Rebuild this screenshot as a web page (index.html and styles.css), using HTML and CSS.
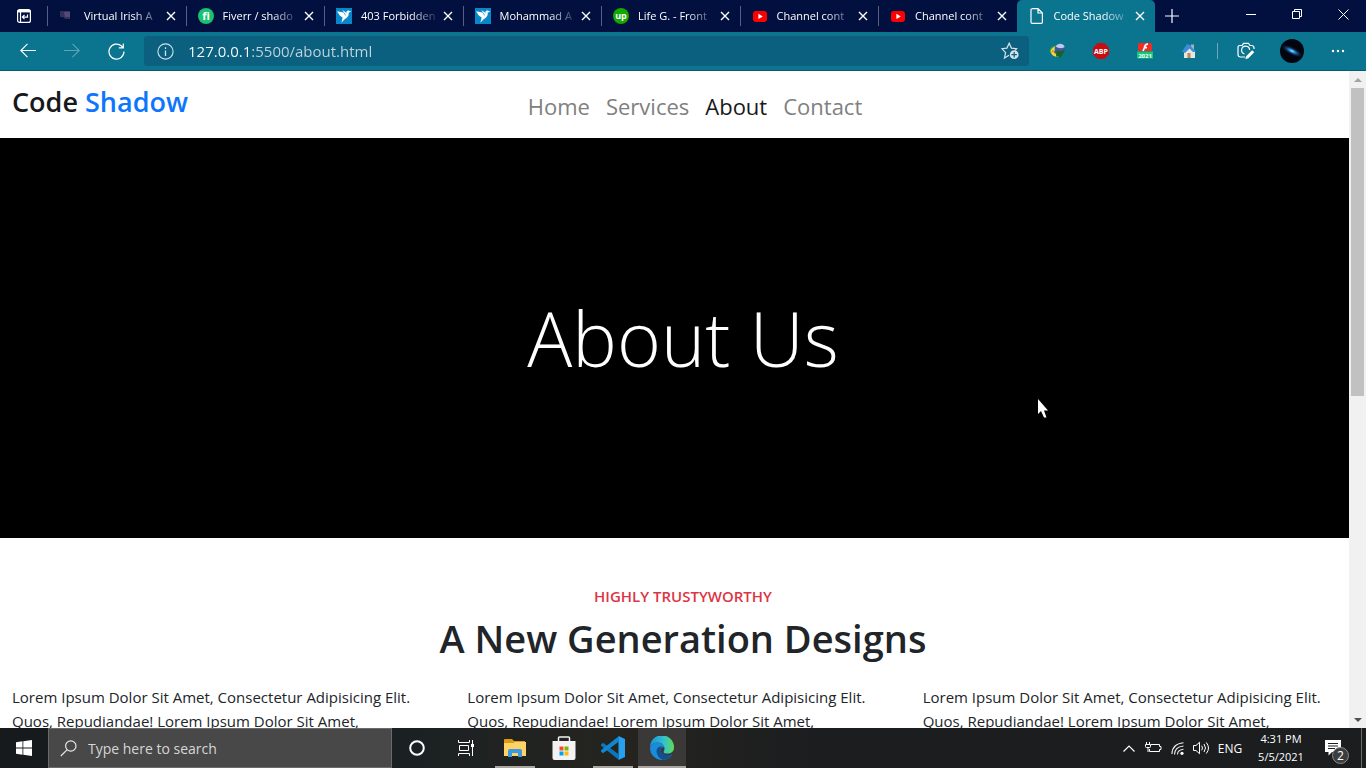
FILE: index.html
```html
<!DOCTYPE html>
<html lang="en">
<head>
<meta charset="utf-8">
<meta name="viewport" content="width=device-width, initial-scale=1">
<title>Code Shadow</title>
<link rel="stylesheet" href="styles.css">
</head>
<body>
<svg class="defs" aria-hidden="true">
  <symbol id="close" viewBox="0 0 10 10"><path d="M1 1l8 8M9 1l-8 8" fill="none" stroke="currentColor" stroke-width="1.4"/></symbol>
  <symbol id="youtube" viewBox="0 0 16 16"><rect x="1" y="3" width="14" height="11" rx="3" fill="#f00"/><path d="M6.4 5.8v5.2l4.4-2.6z" fill="#fff"/></symbol>
  <symbol id="bird" viewBox="0 0 16 16"><rect width="16" height="16" fill="#0787c9"/><path d="M1 3.200L7.600 4.600 9.600 8l-1.800 2.600-4-3.200z" fill="#fff"/><path d="M6.200 2L9.800 4.200 10.200 7.500 8.400 5z" fill="#fff"/><path d="M9.600 7.500L10.400 4q.6-1.600 2.200-1.400L15.400 3.800 12.800 4.600Q13 9.500 8.600 11.200L5.400 14.800 6.600 9.800z" fill="#fff"/></symbol>
</svg>

<header class="browser">
  <div class="tabstrip">
    <button class="tab-actions" aria-label="Tab actions menu"><svg width="16" height="16" viewBox="0 0 16 16" fill="none" stroke="#fff" stroke-width="1.2"><rect x="1.600" y="1.600" width="12.800" height="12.800" rx="2"/><path d="M1.600 3.200h12.800" stroke-width="2.400"/><path d="M4.500 3v11.500M11.500 6.500v2.600H6.500M8.500 7L6.400 9.100l2.100 2.100"/></svg></button>
    <div class="tabs">
      <div class="tab"><button class="tab-title"><svg class="favicon" viewBox="0 0 16 16"><path d="M1 3h10v8H6L4 9H1z" fill="#34305c"/><path d="M5 4h6v5H6z" fill="#544a78"/></svg><span>Virtual Irish A</span></button><button class="tab-close" aria-label="Close tab"><svg><use href="#close"/></svg></button></div>
      <div class="tab"><button class="tab-title"><svg class="favicon" viewBox="0 0 16 16"><circle cx="8" cy="8" r="8" fill="#1dbf73"/><text x="8" y="12" text-anchor="middle" class="glyph-fi">fi</text></svg><span>Fiverr / shado</span></button><button class="tab-close" aria-label="Close tab"><svg><use href="#close"/></svg></button></div>
      <div class="tab"><button class="tab-title"><svg class="favicon"><use href="#bird"/></svg><span>403 Forbidden</span></button><button class="tab-close" aria-label="Close tab"><svg><use href="#close"/></svg></button></div>
      <div class="tab"><button class="tab-title"><svg class="favicon"><use href="#bird"/></svg><span>Mohammad A</span></button><button class="tab-close" aria-label="Close tab"><svg><use href="#close"/></svg></button></div>
      <div class="tab"><button class="tab-title"><svg class="favicon" viewBox="0 0 16 16"><circle cx="8" cy="8" r="8" fill="#14a800"/><text x="8" y="11" text-anchor="middle" class="glyph-up">up</text></svg><span>Life G. - Front</span></button><button class="tab-close" aria-label="Close tab"><svg><use href="#close"/></svg></button></div>
      <div class="tab"><button class="tab-title"><svg class="favicon"><use href="#youtube"/></svg><span>Channel cont</span></button><button class="tab-close" aria-label="Close tab"><svg><use href="#close"/></svg></button></div>
      <div class="tab"><button class="tab-title"><svg class="favicon"><use href="#youtube"/></svg><span>Channel cont</span></button><button class="tab-close" aria-label="Close tab"><svg><use href="#close"/></svg></button></div>
      <div class="tab active"><button class="tab-title"><svg class="favicon" viewBox="0 0 16 16" fill="none" stroke="#fff" stroke-width="1.200"><path d="M3 .6h6l4.400 4.400v9.200q0 1.200-1.200 1.200H3.200Q2 15.400 2 14.200V1.800Q2 .6 3.200.6zM9 .8V5h4.200"/></svg><span>Code Shadow</span></button><button class="tab-close" aria-label="Close tab"><svg><use href="#close"/></svg></button></div>
    </div>
    <button class="new-tab" aria-label="New tab"><svg width="14" height="14" viewBox="0 0 14 14" stroke="#fff" stroke-width="1.200"><path d="M7 0v14M0 7h14"/></svg></button>
    <div class="window-controls">
      <button aria-label="Minimize"><svg width="10" height="10" viewBox="0 0 10 10" stroke="#fff"><path d="M0 5.500h10"/></svg></button>
      <button aria-label="Restore"><svg width="10" height="10" viewBox="0 0 10 10" fill="none" stroke="#fff"><path d="M.5 2.500h7v7h-7zM2.500 2V.5h7v7H8"/></svg></button>
      <button aria-label="Close window"><svg width="11" height="11" viewBox="0 0 11 11" stroke="#fff"><path d="M.5.5l10 10M10.500.5l-10 10"/></svg></button>
    </div>
  </div>
  <div class="toolbar">
    <button aria-label="Back"><svg width="16" height="16" viewBox="0 0 16 16" fill="none" stroke="#fff" stroke-width="1.100"><path d="M16 7.500H.8M7.500.800L.8 7.500l6.700 6.700"/></svg></button>
    <button aria-label="Forward" disabled><svg width="16" height="16" viewBox="0 0 16 16" fill="none" stroke="#5fa3b4" stroke-width="1.100"><path d="M0 7.500h15.200M8.500.800l6.700 6.700-6.700 6.700"/></svg></button>
    <button aria-label="Refresh"><svg width="17" height="17" viewBox="0 0 17 17" fill="none" stroke="#fff" stroke-width="1.200"><path d="M16 8.500A7.500 7.500 0 1 1 13.500 3L15 4.600M15.300.5v4.300h-4.500"/></svg></button>
    <form class="address">
      <svg width="17" height="17" viewBox="0 0 17 17" fill="none" stroke="#cfe3ea" stroke-width="1.100"><circle cx="8.500" cy="8.500" r="7.600"/><path d="M8.500 7.500V13M8.500 4.300v1.600" stroke-width="1.300"/></svg>
      <input type="text" aria-label="Address" value="127.0.0.1:5500/about.html">
      <button type="button" aria-label="Add this page to favorites"><svg width="19" height="18" viewBox="0 0 19 18" fill="none" stroke="#d5e2e7" stroke-width="1.200"><path d="M8 13.200L3.500 16l1.100-5.300L.9 6.700l5-.6L8.200 1.200l2.200 4.900 5.200.6-1.500 1.600"/><circle cx="13.200" cy="12.700" r="4.400" fill="#d5e2e7" stroke="none"/><path d="M13.200 10v5.400M10.500 12.700h5.400" stroke="#0c607f"/></svg></button>
    </form>
    <div class="extensions">
      <button aria-label="Download manager"><svg width="17" height="16" viewBox="0 0 17 16"><path d="M9 2.500C4 2 .5 5 .7 9l3 1.500Q4 6.500 9 5z" fill="#4fa83a"/><path d="M8.500 3.500C4.500 3.500 1.500 6 1.700 9.500l3 1Q4.500 7 9 5.500z" fill="#efe03c"/><path d="M3 7.500q-1.500 3 1 5l5 1-1-3q-3 0-3-3z" fill="#e2702a"/><path d="M4.500 8q0 3 4 3.500v2.500q-5-.5-6.500-4z" fill="#f0d93a"/><circle cx="10.800" cy="6" r="5.200" fill="#3f55a0"/><path d="M6.500 3.500Q8 .8 11 .8q3.500 0 4.700 3.200Q11 6.800 6.500 3.500z" fill="#bccbea"/><path d="M7.500 7.500l2.800.8 5.700-1L11.500 15 9.500 12.500 7 14z" fill="#17641d"/></svg></button>
      <button aria-label="Adblock Plus"><svg width="16" height="16" viewBox="0 0 16 16"><path d="M4.700 0h6.600L16 4.700v6.600L11.300 16H4.700L0 11.300V4.700z" fill="#c70d12"/><text x="8" y="11" text-anchor="middle" class="glyph-abp">ABP</text></svg></button>
      <button aria-label="Flash player"><svg width="16" height="16" viewBox="0 0 16 16"><path d="M1 1.500Q1 0 2.500 0h11Q15 0 15 1.500V8H1z" fill="#f02c25"/><path d="M11 1.200Q8 1 7.300 5L6 8M7 4.700h3" stroke="#fff" stroke-width="1.700" fill="none"/><path d="M0 8.500h16v7H0z" fill="#12c979"/><text x="8" y="14.500" text-anchor="middle" class="glyph-year">2021</text></svg></button>
      <button aria-label="Home extension"><svg width="16" height="16" viewBox="0 0 16 16"><path d="M3 8l6-5 5 5v7H3z" fill="#e7e7e2"/><path d="M10 1.500h3V7h-3z" fill="#a8b1b8"/><path d="M1 8.500L6 1l3 1 6 7H12L8.500 5.500 4 10z" fill="#3d8cda"/><path d="M6.500 10h3v5h-3z" fill="#b8894f"/></svg></button>
      <span class="separator"></span>
      <button aria-label="Web capture"><svg width="18" height="18" viewBox="0 0 18 18" fill="none" stroke="#fff" stroke-width="1.200"><path d="M8 15H3.500Q1 15 1 12.500v-7Q1 3.500 3 3.500h2L6.500 1.300h5L13 3.500h1.500Q17 3.500 17 6v1"/><path d="M7.500 12A4 4 0 1 1 12.600 8"/><path d="M16.200 9.200l-6.200 6.300" stroke-width="3"/><path d="M8.300 17.200l.8-3 2.100 2.100z" fill="#fff" stroke="none"/></svg></button>
      <button class="profile" aria-label="Profile"><svg width="24" height="24" viewBox="0 0 24 24"><defs><radialGradient id="galaxy"><stop offset="0" stop-color="#c8ecff"/><stop offset=".25" stop-color="#2b93e6"/><stop offset="1" stop-color="#031638" stop-opacity="0"/></radialGradient></defs><circle cx="12" cy="12" r="12" fill="#02050f"/><ellipse cx="12" cy="12" rx="12" ry="4" fill="url(#galaxy)" transform="rotate(27 12 12)"/></svg></button>
      <button aria-label="Settings and more"><svg width="14" height="4" viewBox="0 0 14 4" fill="#fff"><circle cx="2" cy="2" r="1.200"/><circle cx="7" cy="2" r="1.200"/><circle cx="12" cy="2" r="1.200"/></svg></button>
    </div>
  </div>
</header>

<div class="viewport">
  <div class="page">
    <div class="site-header">
      <a class="brand" href="#">Code <span>Shadow</span></a>
      <nav class="site-nav" aria-label="Main">
        <a href="#">Home</a><a href="#">Services</a><a class="current" href="#">About</a><a href="#">Contact</a>
      </nav>
    </div>
    <section class="hero"><h1>About Us</h1></section>
    <section class="intro">
      <p class="eyebrow">HIGHLY TRUSTYWORTHY</p>
      <h2>A New Generation Designs</h2>
      <div class="columns">
        <p>Lorem Ipsum Dolor Sit Amet, Consectetur Adipisicing Elit. Quos, Repudiandae! Lorem Ipsum Dolor Sit Amet,</p>
        <p>Lorem Ipsum Dolor Sit Amet, Consectetur Adipisicing Elit. Quos, Repudiandae! Lorem Ipsum Dolor Sit Amet,</p>
        <p>Lorem Ipsum Dolor Sit Amet, Consectetur Adipisicing Elit. Quos, Repudiandae! Lorem Ipsum Dolor Sit Amet,</p>
      </div>
    </section>
  </div>
  <div class="scrollbar">
    <button aria-label="Scroll up"><svg width="8" height="4" viewBox="0 0 8 4"><path d="M0 4l4-4 4 4z" fill="#a3a3a3"/></svg></button>
    <div class="track"><div class="thumb"></div></div>
    <button aria-label="Scroll down"><svg width="8" height="4" viewBox="0 0 8 4"><path d="M0 0l4 4 4-4z" fill="#505050"/></svg></button>
  </div>
  <svg class="cursor" width="12" height="19" viewBox="0 0 12 19" aria-hidden="true"><path d="M0 0v15l3-3 3 6.500h2.500L6 11.500h4z" fill="#fff"/></svg>
</div>

<footer class="taskbar">
  <button class="start" aria-label="Start"><svg width="16" height="16" viewBox="0 0 16 16" fill="#fff"><path d="M0 2.200L6.500 1.300v6.300H0zM7.300 1.200L16 0v7.600H7.300zM0 8.400h6.500v6.300L0 13.800zM7.300 8.400H16V16l-8.700-1.200z"/></svg></button>
  <label class="search"><svg width="17" height="17" viewBox="0 0 17 17" fill="none" stroke="#e8e8e8" stroke-width="1.200"><circle cx="10.800" cy="6" r="5.200"/><path d="M7 9.800L.8 16"/></svg><input type="text" aria-label="Search" placeholder="Type here to search"></label>
  <div class="apps">
    <button aria-label="Cortana"><svg width="16" height="16" viewBox="0 0 16 16"><circle cx="8" cy="8" r="6.800" fill="none" stroke="#fff" stroke-width="2"/></svg></button>
    <button aria-label="Task view"><svg width="17" height="16" viewBox="0 0 17 16" fill="none" stroke="#fff"><path d="M.5 0v2.500h11V0M1.500 5.500h9v5h-9zM.5 16v-2.500h11V16M14.500 0v16"/><path d="M13 4h3v3h-3z" fill="#fff" stroke="none"/></svg></button>
    <button class="open" aria-label="File Explorer"><svg width="22" height="18" viewBox="0 0 22 18"><path d="M0 1Q0 0 1 0h7l2 2h11v5H0z" fill="#dd9b0f"/><path d="M0 4h9l2-1h11v14H0z" fill="#fdd267"/><path d="M4 18v-6q0-2 2-2h10q2 0 2 2v6h-4v-4H8v4z" fill="#3b98e2"/></svg></button>
    <button aria-label="Microsoft Store"><svg width="24" height="24" viewBox="0 0 24 24"><path d="M6.500 6V2q0-1 1-1h9q1 0 1 1v4" fill="none" stroke="#f3f3f3" stroke-width="1.500"/><path d="M.5 5h23v17q0 2-2 2h-19q-2 0-2-2z" fill="#f3f3f3"/><path d="M7.500 10.500h4v4h-4z" fill="#f04e23"/><path d="M12.500 10.500h4v4h-4z" fill="#7eb900"/><path d="M7.500 15.500h4v4h-4z" fill="#00a3ee"/><path d="M12.500 15.500h4v4h-4z" fill="#fdb813"/></svg></button>
    <button class="open" aria-label="Visual Studio Code"><svg width="24" height="24" viewBox="0 0 24 24"><path d="M17.500 0L24 3v18l-6.500 3z" fill="#27a0ee"/><path d="M0 8.500L2 6.800 18 18.500V24L0 9.800z" fill="#0877c0"/><path d="M0 15.500l2 1.700L18 5.500V0L0 14.200z" fill="#1187d1"/></svg></button>
    <button class="open current" aria-label="Microsoft Edge"><svg width="24" height="24" viewBox="0 0 24 24"><defs><linearGradient id="edgeTop"><stop offset="0" stop-color="#1793d8"/><stop offset=".6" stop-color="#35c2cb"/><stop offset="1" stop-color="#60dd4c"/></linearGradient></defs><path d="M0 11.500C1 8.500 4 6.500 7.500 6.500q5 0 7 4.500-4 0-4 3.500 1 5 7 5 3 0 5-1.500Q19 24 12 24A12 12 0 0 1 0 11.500z" fill="#1b8bdc"/><path d="M12.500 10.500q-6-.5-6 5 .5 6 6.500 8.500 6-.5 9.500-6-2 1-5 1-6 0-7-5 0-2.500 2-3.500z" fill="#10508f"/><path d="M0 11A12 12 0 0 1 24 11.500c0 4-3 6-6.500 6-3 0-4.500-1-3.700-2.200C16 11.500 13 6.500 8 6.500 4.500 6.500 1 8.500 0 11z" fill="url(#edgeTop)"/></svg></button>
  </div>
  <div class="tray">
    <button aria-label="Show hidden icons"><svg width="12" height="7" viewBox="0 0 12 7" fill="none" stroke="#fff" stroke-width="1.200"><path d="M.5 6.500L6 1l5.500 5.500"/></svg></button>
    <button aria-label="Battery"><svg width="17" height="12" viewBox="0 0 17 12" fill="none" stroke="#fff"><path d="M6 2.500h8.500v2H16v3h-1.500v2h-10V7M1.500 0v2.500M4.500 0v2.500M.5 2.500h5v2q0 1-1 1h-3q-1 0-1-1zM3 5.500V10"/></svg></button>
    <button aria-label="Network"><svg width="13" height="13" viewBox="0 0 13 13" fill="none" stroke="#eee" stroke-width="1.100"><path d="M1 12Q1 2 12.500.8M3.500 12.500q0-7.500 9-8.500M6.500 12.500q0-4.500 6-5.200"/><circle cx="11" cy="11.300" r="1.600" fill="#fff" stroke="none"/></svg></button>
    <button aria-label="Volume"><svg width="17" height="14" viewBox="0 0 17 14" fill="none" stroke="#fff"><path d="M.5 4.500H3L6.500 1.300v11.400L3 9.500H.5zM8.700 4.700q1.600 2.300 0 4.600M11 3q3 4 0 8M13.300 1.500q4.400 5.500 0 11"/></svg></button>
    <button class="language" aria-label="Language">ENG</button>
    <button class="clock"><span>4:31 PM</span><span>5/5/2021</span></button>
    <button class="notifications" aria-label="Notifications"><svg width="16" height="16" viewBox="0 0 16 16"><path d="M0 0h16v12H7l-3.500 3.500V12H0z" fill="#fff"/><path d="M3 3.500h10M3 6h10M3 8.500h7" stroke="#1d2023"/></svg><span class="badge">2</span></button>
    <button class="show-desktop" aria-label="Show desktop"></button>
  </div>
</footer>
</body>
</html>
```

FILE: styles.css
```css
* { box-sizing: border-box; }
body {
  margin: 0;
  height: 100vh;
  display: flex;
  flex-direction: column;
  overflow: hidden;
  font-family: "Open Sans", "Noto Sans", sans-serif;
  font-size: 15px;
  color: #212529;
  background: #fff;
}
button {
  display: flex;
  align-items: center;
  justify-content: center;
  flex: none;
  padding: 0;
  border: 0;
  background: none;
  color: #fff;
  font: inherit;
}
input { border: 0; padding: 0; background: none; font: inherit; outline: 0; min-width: 0; }
a { text-decoration: none; }
svg { flex: none; display: block; }
.defs { position: absolute; width: 0; height: 0; }

/* Tab strip */
.tabstrip { display: flex; height: 32px; background: #01103f; }
.tab-actions { width: 47px; }
.tabs { display: flex; flex: 0 1 1108px; min-width: 0; }
.tab {
  display: flex;
  align-items: center;
  flex: 1;
  min-width: 0;
  padding: 0 4px 0 12px;
  background: linear-gradient(#59607f, #59607f) left center / 1px 20px no-repeat;
}
.tab.active { background: #0b748e; border-radius: 5px 5px 0 0; }
.tab-title { flex: 1; min-width: 0; justify-content: flex-start; gap: 9px; font-size: 11px; line-height: 20px; }
.tab-title span {
  flex: 1;
  min-width: 0;
  overflow: hidden;
  white-space: nowrap;
  text-align: left;
  mask-image: linear-gradient(90deg, #000 65%, rgba(0, 0, 0, 0.1));
}
.favicon { width: 16px; height: 16px; }
.tab-close { width: 22px; height: 24px; }
.tab-close svg { width: 10px; height: 10px; }
.new-tab { width: 34px; }
.window-controls { display: flex; margin-left: auto; }
.window-controls button { width: 46px; padding-bottom: 4px; }
.glyph-fi { font: bold 11px "Open Sans", sans-serif; fill: #fff; }
.glyph-up { font: bold 9px "Open Sans", sans-serif; fill: #fff; }
.glyph-abp { font: bold 7px "Open Sans", sans-serif; fill: #fff; }
.glyph-year { font: bold 6px "Open Sans", sans-serif; fill: #fff; }

/* Toolbar */
.toolbar {
  display: flex;
  align-items: center;
  height: 39px;
  padding: 0 6px;
  background: #0b748e;
  border-bottom: 1px solid #0b5a72;
}
.toolbar button { width: 44px; height: 30px; }
.address {
  display: flex;
  align-items: center;
  flex: 1;
  height: 30px;
  margin: 0 6px;
  padding-left: 13px;
  gap: 14px;
  border-radius: 3px;
  background: #0c607f;
}
.address input {
  flex: 1;
  height: 30px;
  color: transparent;
  background: linear-gradient(90deg, #fff 63px, #c2d5dd 63px);
  background-clip: text;
}
.toolbar .address button { width: 38px; }
.extensions { display: flex; align-items: center; }
.separator { width: 1px; height: 16px; margin: 0 6px; background: #6da9b9; }
.toolbar .profile { width: 48px; }

/* Web page */
.viewport { position: relative; flex: 1; min-height: 0; overflow: hidden; }
.site-header {
  display: grid;
  grid-template-columns: 1fr auto 1fr;
  align-items: start;
  height: 67px;
  padding: 8px 12px;
}
.brand { color: #16181b; font-size: 27px; font-weight: 600; line-height: 46px; }
.brand span { color: #0d76fd; }
.site-nav { display: flex; padding-left: 24px; }
.site-nav a { padding: 8px; color: #808080; font-size: 22px; line-height: 38px; }
.site-nav .current { color: #191919; }
.hero { display: grid; place-items: center; height: 400px; background: #000; color: #fff; }
.hero h1 { margin: 0; font-size: 75px; font-weight: 300; line-height: 96px; }
.intro { padding-top: 48px; text-align: center; }
.eyebrow { margin: 0; color: #dc3545; font-size: 15px; font-weight: 600; line-height: 20px; }
.intro h2 { margin: 8px 0 23px; font-size: 38px; font-weight: 600; line-height: 48px; }
.columns { display: grid; grid-template-columns: repeat(3, 1fr); text-align: left; }
.columns p { margin: 0; padding: 0 12px; line-height: 24px; }

.scrollbar {
  position: absolute;
  inset: 0 0 0 auto;
  width: 17px;
  display: flex;
  flex-direction: column;
  background: #f1f1f1;
}
.scrollbar button { height: 17px; }
.track { flex: 1; padding: 0 2px; }
.thumb { height: 49.5%; background: #c1c1c1; }
.cursor { position: absolute; left: 1038px; top: 328px; }

/* Taskbar */
.taskbar { display: flex; flex: none; height: 40px; background: linear-gradient(90deg, #171a1d, #1b2123 30%, #25241f 45%, #1b1d1f 60%); }
.start { width: 48px; }
.search {
  display: flex;
  align-items: center;
  gap: 11px;
  flex: 0 1 344px;
  padding: 0 11px;
  background: #484848;
  border: 1px solid #6b6b6b;
}
.search input { flex: 1; color: #e0e0e0; font-size: 14px; }
.search input::placeholder { color: #d6d6d6; opacity: 1; }
.apps { display: flex; gap: 1px; padding-left: 1px; }
.apps button { width: 48px; }
.apps .open { background: linear-gradient(#aaa59f, #aaa59f) center bottom / 40px 2px no-repeat; }
.apps .current { background: linear-gradient(#aaa59f, #aaa59f) center bottom / 48px 2px no-repeat #3a3938; }
.tray { display: flex; margin-left: auto; font-size: 12px; }
.tray button { width: 24px; }
.tray .language { width: 34px; }
.tray .clock { width: 68px; flex-direction: column; line-height: 18px; font-size: 11px; }
.tray .notifications { position: relative; width: 46px; padding-right: 10px; }
.badge {
  position: absolute;
  right: 12px;
  bottom: 4px;
  width: 17px;
  height: 17px;
  border: 1px solid #8c8c8c;
  border-radius: 50%;
  background: #3c3d3f;
  font-size: 12px;
  line-height: 15px;
}
.tray .show-desktop { width: 5px; border-left: 1px solid #6b6b6b; }
```
